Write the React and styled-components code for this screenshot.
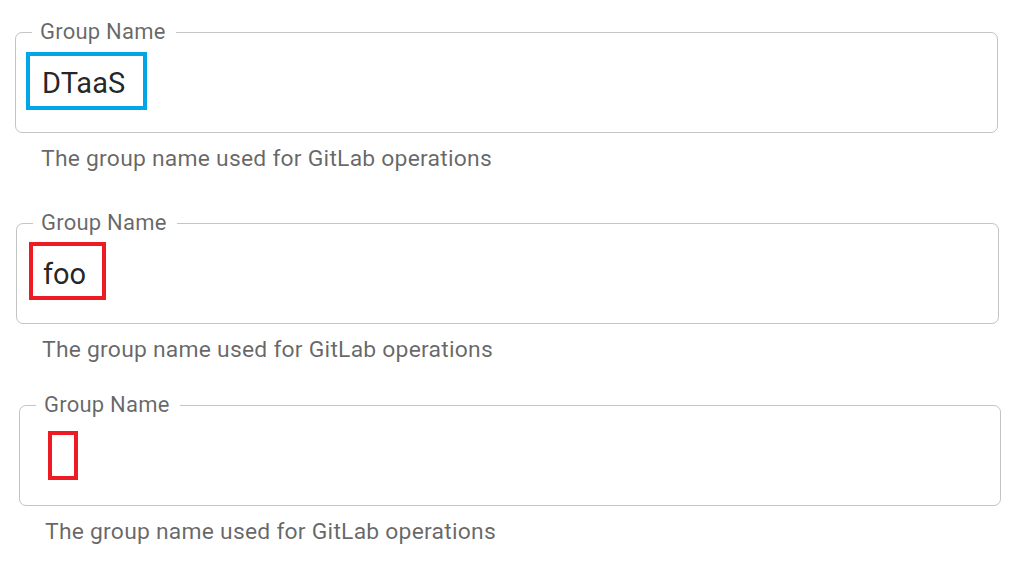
import React from 'react'
import styled, { createGlobalStyle } from 'styled-components'

const GlobalStyle = createGlobalStyle`
  html, body {
    margin: 0;
    padding: 0;
    background: #ffffff;
  }
  body {
    font-family: Roboto, "Liberation Sans", Arial, sans-serif;
  }
`

const Page = styled.div`
  display: flex;
  flex-direction: column;
  padding-top: 20px;
`

const Field = styled.div`
  display: flex;
  flex-direction: column;
  width: ${props => props.width}px;
  margin-left: ${props => props.left}px;
  margin-top: ${props => props.gap}px;
`

const Outline = styled.fieldset`
  margin: 0;
  padding: 0 0 33px 16px;
  border: 1px solid rgba(0, 0, 0, 0.23);
  border-radius: 7px;
  min-width: 0;
`

const Label = styled.legend`
  padding: 0 10px 0 8px;
  font-size: 22px;
  line-height: 24px;
  color: rgba(0, 0, 0, 0.6);
  letter-spacing: 0.01em;
`

const ValueRow = styled.div`
  position: relative;
  margin-top: 23px;
  padding-left: 10px;
  height: 32px;
  font-size: 29px;
  line-height: 32px;
  color: rgba(0, 0, 0, 0.87);
`

// annotation box drawn over the entered value
const Highlight = styled.span`
  position: absolute;
  box-sizing: border-box;
  left: ${props => props.x}px;
  top: ${props => props.y}px;
  width: ${props => props.w}px;
  height: ${props => props.h}px;
  border: 4px solid ${props => props.color};
  pointer-events: none;
`

const Helper = styled.p`
  margin: 13px 0 0 26px;
  font-size: 22.9px;
  line-height: 26px;
  color: rgba(0, 0, 0, 0.6);
  letter-spacing: 0.01em;
`

const fields = [
  { value: 'DTaaS', left: 15, width: 983, gap: 0, mark: { x: -6, y: -15, w: 121, h: 58, color: '#00a6e6' } },
  { value: 'foo', left: 16, width: 983, gap: 39, mark: { x: -4, y: -16, w: 77, h: 58, color: '#ed1c24' } },
  { value: '', left: 19, width: 982, gap: 30, mark: { x: 12, y: -9, w: 30, h: 49, color: '#ed1c24' } },
]

const App = () => {
  return (
    <>
      <GlobalStyle />
      <Page>
        {fields.map((f, i) => (
          <Field key={i} left={f.left} width={f.width} gap={f.gap}>
            <Outline>
              <Label>Group Name</Label>
              <ValueRow>
                {f.value}
                <Highlight {...f.mark} />
              </ValueRow>
            </Outline>
            <Helper>The group name used for GitLab operations</Helper>
          </Field>
        ))}
      </Page>
    </>
  )
}

export default App
